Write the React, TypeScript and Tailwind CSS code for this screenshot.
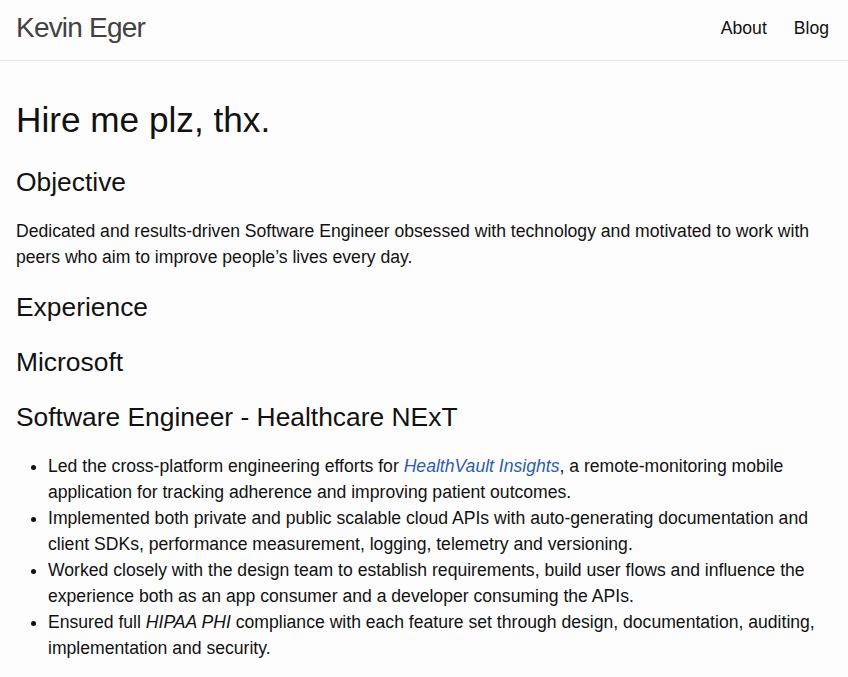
import React from "react";

export default function App() {
  return (
    <div className="min-h-screen bg-[#fdfdfd] text-[#111] font-['Liberation_Sans',Arial,sans-serif]">
      <header className="h-[61px] border-b border-[#e8e8e8] flex items-center justify-between pl-4 pr-[19px] pb-[4px]">
        <div className="text-[28px] tracking-[-0.8px] text-[#424242]">Kevin Eger</div>
        <nav className="flex gap-[27px] text-[17.6px] text-[#111]">
          <span>About</span>
          <span>Blog</span>
        </nav>
      </header>
      <main className="px-4 pt-[36px] text-[17.6px]">
        <h1 className="text-[35.2px] leading-[46px]">Hire me plz, thx.</h1>
        <h2 className="text-[26.4px] leading-[34px] mt-[22px]">Objective</h2>
        <p className="leading-[26px] mt-[19px]">
          Dedicated and results-driven Software Engineer obsessed with technology and motivated to work with peers who aim to improve people’s lives every day.
        </p>
        <h2 className="text-[26.4px] leading-[34px] mt-[20px]">Experience</h2>
        <h2 className="text-[26.4px] leading-[34px] mt-[21px]">Microsoft</h2>
        <h2 className="text-[26.4px] leading-[34px] mt-[21px]">Software Engineer - Healthcare NExT</h2>
        <ul className="list-disc pl-[32px] leading-[26px] mt-[19px]">
          <li>
            Led the cross-platform engineering efforts for <a className="italic text-[#2a5db0]">HealthVault Insights</a>, a remote-monitoring mobile application for tracking adherence and improving patient outcomes.
          </li>
          <li>
            Implemented both private and public scalable cloud APIs with auto-generating documentation and client SDKs, performance measurement, logging, telemetry and versioning.
          </li>
          <li>
            Worked closely with the design team to establish requirements, build user flows and influence the experience both as an app consumer and a developer consuming the APIs.
          </li>
          <li>
            Ensured full <em>HIPAA PHI</em> compliance with each feature set through design, documentation, auditing, implementation and security.
          </li>
        </ul>
      </main>
    </div>
  );
}
